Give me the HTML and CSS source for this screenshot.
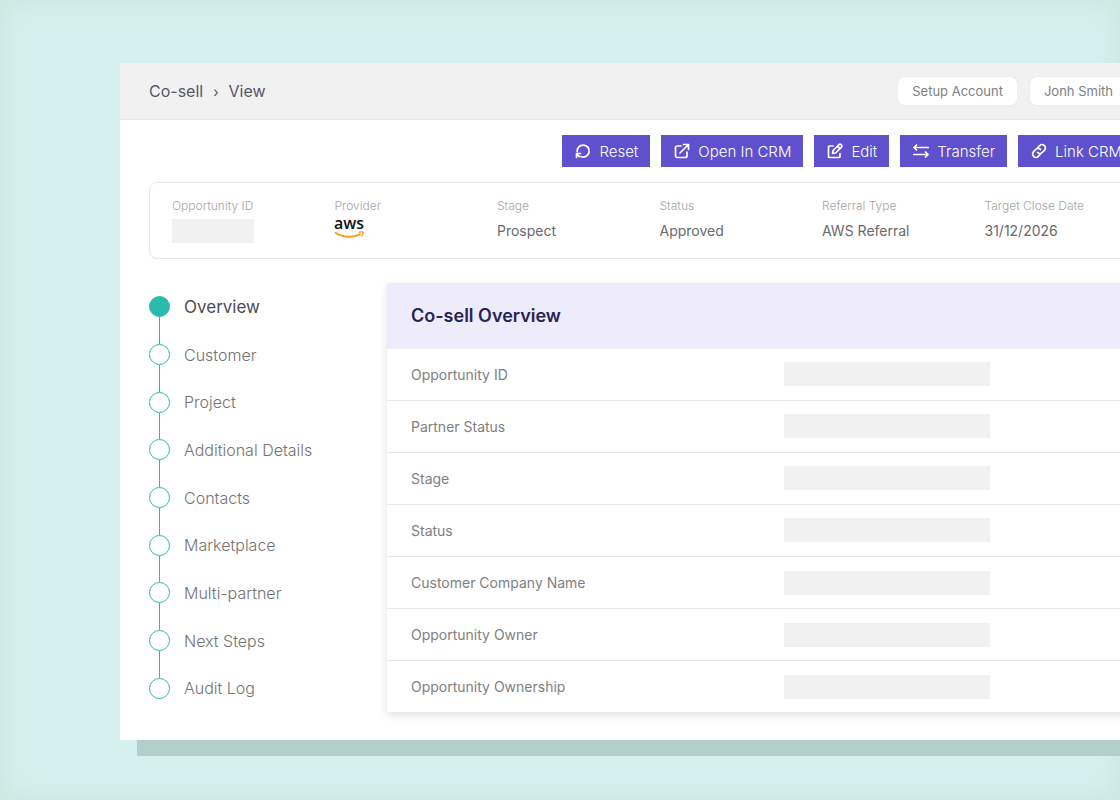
FILE: index.html
```html
<!DOCTYPE html>
<html lang="en">
<head>
	<meta charset="utf-8">
	<title>Co-sell - View</title>
	<meta name="viewport" content="width=device-width, initial-scale=1">
	<link rel="stylesheet" href="styles.css">
</head>

<body>

	<div class="window">
		<header class="topbar">
			<nav class="crumbs" aria-label="Breadcrumb">
				<a href="#">Co-sell</a>
				<span class="sep">›</span>
				<a href="#">View</a>
			</nav>
			<div class="account">
				<button type="button">Setup Account</button>
				<button type="button">Jonh Smith</button>
			</div>
		</header>

		<main class="content">
			<div class="toolbar">
				<button type="button">
					<svg viewBox="0 0 16 16"><path d="M2.200 8.500a6 6 0 1 1 4 5.200M1.500 14.500v-4h4M1.700 11.500l2.600 2"/></svg>
					Reset
				</button>
				<button type="button">
					<svg viewBox="0 0 16 16"><path d="M7 3H3.200A1.700 1.700 0 0 0 1.500 4.700v8.100a1.700 1.700 0 0 0 1.700 1.700h8.100a1.700 1.700 0 0 0 1.700-1.700V9M6 10l8-8M9.500 1.500h5v5"/></svg>
					Open In CRM
				</button>
				<button type="button">
					<svg viewBox="0 0 16 16"><path d="M6 3H2.500a1 1 0 0 0-1 1v9.500a1 1 0 0 0 1 1H12a1 1 0 0 0 1-1V10.500M5.500 10.500l.6-3L12 1.600a1.300 1.300 0 0 1 1.900 0l.6.6a1.300 1.300 0 0 1 0 1.900L8.600 10zM10.500 3.200l2.400 2.400"/></svg>
					Edit
				</button>
				<button type="button">
					<svg viewBox="0 0 16 16"><path d="M15.500 4.500H1M3.500 2 1 4.500 3.500 7M.5 11.500H15M12.500 9l2.500 2.500-2.500 2.500"/></svg>
					Transfer
				</button>
				<button type="button">
					<svg viewBox="0 0 16 16"><path d="M7 4.300l1.700-1.700a3.200 3.200 0 0 1 4.700 4.700l-2.200 2.200a3.200 3.200 0 0 1-4.700 0M9 11.700l-1.700 1.700a3.200 3.200 0 0 1-4.700-4.700l2.200-2.200a3.200 3.200 0 0 1 4.700 0"/></svg>
					Link CRM
				</button>
			</div>

			<dl class="summary">
				<div>
					<dt>Opportunity ID</dt>
					<dd><span class="blank small"></span></dd>
				</div>
				<div>
					<dt>Provider</dt>
					<dd>
						<svg class="aws" viewBox="0 0 32 22" role="img" aria-label="aws">
							<text x="-1" y="10">aws</text>
							<path class="smile" d="M0 13.500c8 5.300 18 5.300 25.500 1.600"/>
							<path class="tip" d="M23.700 13.400c1.700-.8 4-.7 4.400-.2.400.7-.4 3-1.700 4.200"/>
						</svg>
					</dd>
				</div>
				<div>
					<dt>Stage</dt>
					<dd>Prospect</dd>
				</div>
				<div>
					<dt>Status</dt>
					<dd>Approved</dd>
				</div>
				<div>
					<dt>Referral Type</dt>
					<dd>AWS Referral</dd>
				</div>
				<div>
					<dt>Target Close Date</dt>
					<dd>31/12/2026</dd>
				</div>
			</dl>

			<div class="columns">
				<ol class="steps">
					<li class="active"><span class="track"><i></i></span><a href="#">Overview</a></li>
					<li><span class="track"><i></i></span><a href="#">Customer</a></li>
					<li><span class="track"><i></i></span><a href="#">Project</a></li>
					<li><span class="track"><i></i></span><a href="#">Additional Details</a></li>
					<li><span class="track"><i></i></span><a href="#">Contacts</a></li>
					<li><span class="track"><i></i></span><a href="#">Marketplace</a></li>
					<li><span class="track"><i></i></span><a href="#">Multi-partner</a></li>
					<li><span class="track"><i></i></span><a href="#">Next Steps</a></li>
					<li><span class="track"><i></i></span><a href="#">Audit Log</a></li>
				</ol>

				<section class="panel">
					<h2>Co-sell Overview</h2>
					<table>
						<tr><th scope="row">Opportunity ID</th><td><span class="blank"></span></td></tr>
						<tr><th scope="row">Partner Status</th><td><span class="blank"></span></td></tr>
						<tr><th scope="row">Stage</th><td><span class="blank"></span></td></tr>
						<tr><th scope="row">Status</th><td><span class="blank"></span></td></tr>
						<tr><th scope="row">Customer Company Name</th><td><span class="blank"></span></td></tr>
						<tr><th scope="row">Opportunity Owner</th><td><span class="blank"></span></td></tr>
						<tr><th scope="row">Opportunity Ownership</th><td><span class="blank"></span></td></tr>
					</table>
				</section>
			</div>
		</main>
	</div>

</body>
</html>
```
FILE: styles.css
```css
* {
	box-sizing: border-box;
}

body {
	min-height: 100vh;
	margin: 0;
	padding: 63px 0 60px 120px;
	overflow: hidden;
	font-family: Inter, "Liberation Sans", sans-serif;
	font-size: 14px;
	color: #808082;
	background: #d5f0ee;
	box-shadow: inset 0 0 28px #c9e4dc;
}

a {
	color: inherit;
	text-decoration: none;
}

button {
	font-family: inherit;
	border: 0;
	cursor: pointer;
}

/* The window runs off the right edge of the page */
.window {
	margin-right: -78px;
	background: #fff;
	box-shadow: 17px 16px 0 #b4ceca;
}

.topbar {
	display: flex;
	align-items: center;
	justify-content: space-between;
	height: 57px;
	padding: 0 71px 0 29px;
	background: #f1f1f1;
	border-bottom: 1px solid #e7e7e9;
}

.crumbs {
	display: flex;
	align-items: center;
	gap: 10px;
	font-size: 16px;
	color: #56566c;
}

.crumbs .sep {
	font-size: 14px;
}

.account {
	display: flex;
	gap: 13px;
}

.account button {
	height: 28px;
	padding: 0 14px;
	font-size: 13px;
	color: #808082;
	background: #fff;
	border-radius: 6px;
	box-shadow: 0 0 1px #c8c8d2;
}

.content {
	padding: 15px 28px 28px 29px;
}

.toolbar {
	display: flex;
	justify-content: flex-end;
	gap: 11px;
	padding-right: 36px;
}

.toolbar button {
	display: flex;
	align-items: center;
	gap: 8px;
	height: 32px;
	padding: 0 12px 0 13px;
	font-size: 15px;
	font-weight: 300;
	color: #fff;
	background: #5f50cd;
}

.toolbar svg {
	width: 16px;
	height: 16px;
	fill: none;
	stroke: #fff;
	stroke-width: 1.7;
	stroke-linecap: round;
	stroke-linejoin: round;
}

.summary {
	display: grid;
	grid-template-columns: repeat(6, 1fr);
	height: 77px;
	margin: 15px 0 24px;
	padding: 14px 22px;
	border: 1px solid #e6e6e6;
	border-radius: 8px;
}

.summary dt {
	font-size: 12px;
	font-weight: 300;
	line-height: 18px;
	color: #a5a5a7;
}

.summary dd {
	margin: 4px 0 0;
	line-height: 24px;
	color: #69696c;
}

.blank {
	display: block;
	width: 206px;
	height: 24px;
	background: #f1f1f1;
}

.blank.small {
	width: 82px;
}

.aws {
	display: block;
	width: 32px;
	height: 22px;
	overflow: visible;
}

.aws text {
	font-family: "Open Sans", "Noto Sans", sans-serif;
	font-size: 16px;
	font-weight: 600;
	fill: #111;
}

.aws path {
	fill: none;
	stroke: #f59b1c;
	stroke-width: 2;
}

.aws .tip {
	stroke-width: 1.3;
}

.columns {
	display: flex;
}

.steps {
	display: flex;
	flex-direction: column;
	flex: 0 0 238px;
	margin: 0;
	padding: 0;
	list-style: none;
	font-size: 16px;
	font-weight: 300;
	color: #737375;
}

.steps li {
	display: flex;
	flex: 1;
	align-items: center;
	gap: 14px;
}

.track {
	display: flex;
	flex-direction: column;
	align-items: center;
	align-self: stretch;
}

.track::before,
.track::after {
	content: "";
	flex: 1;
	width: 1px;
	background: #2bbbac;
}

.steps li:first-child .track::before,
.steps li:last-child .track::after {
	background: none;
}

.track i {
	width: 21px;
	height: 21px;
	border: 1px solid #2bbbac;
	border-radius: 50%;
}

.steps .active {
	font-size: 17px;
	font-weight: 400;
	color: #4c4c4f;
}

.active .track i {
	background: #2bbbac;
}

.panel {
	flex: 1;
	background: #fff;
	border-radius: 4px 4px 0 0;
	box-shadow: 0 3px 8px rgba(0, 0, 0, 0.12);
}

.panel h2 {
	margin: 0;
	padding: 0 24px;
	font-size: 18px;
	font-weight: 600;
	line-height: 66px;
	color: #282352;
	background: #eeecfa;
	border-radius: 4px 4px 0 0;
}

.panel table {
	width: 100%;
	height: 363px;
	table-layout: fixed;
	border-collapse: collapse;
}

.panel th,
.panel td {
	padding: 0 5px;
	border-bottom: 1px solid #e8e8ea;
}

.panel th {
	padding-left: 24px;
	font-weight: 400;
	text-align: left;
}

.panel tr:last-child th,
.panel tr:last-child td {
	border-bottom: 0;
}
```
